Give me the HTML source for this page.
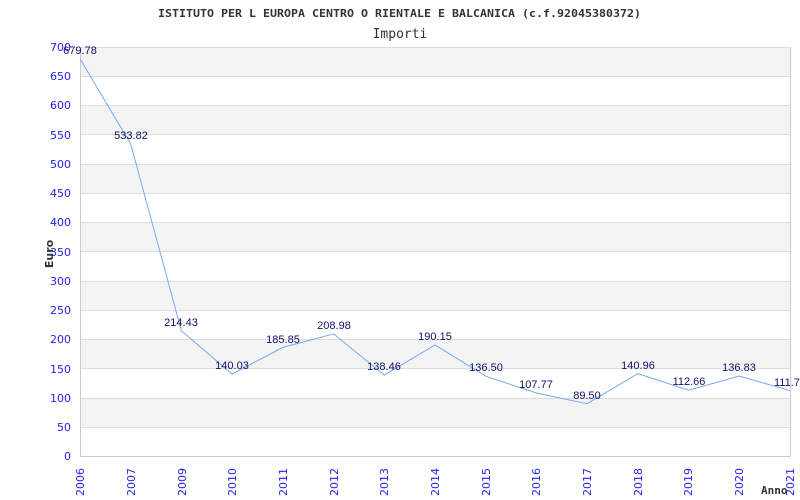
<!DOCTYPE html>
<html><head><meta charset="utf-8"><style>body{margin:0;background:#fff}svg{display:block}</style></head><body>
<svg width="800" height="500" xmlns="http://www.w3.org/2000/svg">
<text x="158" y="17" textLength="483" lengthAdjust="spacingAndGlyphs" font-family="DejaVu Sans Mono, Liberation Mono, monospace" font-weight="bold" font-size="11" fill="#333">ISTITUTO PER L EUROPA CENTRO O RIENTALE E BALCANICA (c.f.92045380372)</text>
<text x="400" y="38" text-anchor="middle" font-family="DejaVu Sans Mono, Liberation Mono, monospace" font-size="13" fill="#333">Importi</text>
<g fill="#f3f3f3">
<rect x="80" y="47" width="710" height="29.2"/>
<rect x="80" y="105.4" width="710" height="29.2"/>
<rect x="80" y="163.9" width="710" height="29.2"/>
<rect x="80" y="222.3" width="710" height="29.2"/>
<rect x="80" y="280.7" width="710" height="29.2"/>
<rect x="80" y="339.1" width="710" height="29.2"/>
<rect x="80" y="397.6" width="710" height="29.2"/>
</g>
<g stroke="#ddd" stroke-width="1">
<line x1="80" x2="790" y1="47.5" y2="47.5"/><line x1="80" x2="790" y1="76.5" y2="76.5"/><line x1="80" x2="790" y1="105.5" y2="105.5"/><line x1="80" x2="790" y1="134.5" y2="134.5"/><line x1="80" x2="790" y1="164.5" y2="164.5"/><line x1="80" x2="790" y1="193.5" y2="193.5"/><line x1="80" x2="790" y1="222.5" y2="222.5"/><line x1="80" x2="790" y1="251.5" y2="251.5"/><line x1="80" x2="790" y1="281.5" y2="281.5"/><line x1="80" x2="790" y1="310.5" y2="310.5"/><line x1="80" x2="790" y1="339.5" y2="339.5"/><line x1="80" x2="790" y1="368.5" y2="368.5"/><line x1="80" x2="790" y1="398.5" y2="398.5"/><line x1="80" x2="790" y1="427.5" y2="427.5"/>
</g>
<g stroke="#ccc" stroke-width="1"><line x1="80.5" x2="80.5" y1="47" y2="457"/><line x1="80" x2="790" y1="456.5" y2="456.5"/><line x1="790.5" x2="790.5" y1="47" y2="457"/></g>
<g font-family="DejaVu Sans, sans-serif" font-size="11" fill="#2222ee" text-anchor="end">
<text x="71" y="51">700</text><text x="71" y="80">650</text><text x="71" y="109">600</text><text x="71" y="139">550</text><text x="71" y="168">500</text><text x="71" y="197">450</text><text x="71" y="226">400</text><text x="71" y="256">350</text><text x="71" y="285">300</text><text x="71" y="314">250</text><text x="71" y="343">200</text><text x="71" y="373">150</text><text x="71" y="402">100</text><text x="71" y="431">50</text><text x="71" y="460">0</text>
</g>
<text transform="translate(53,254) rotate(-90)" text-anchor="middle" font-family="DejaVu Sans, sans-serif" font-weight="bold" font-size="11" fill="#333">Euro</text>
<g font-family="DejaVu Sans, sans-serif" font-size="11" fill="#2222ee">
<text transform="translate(84,496) rotate(-90)">2006</text>
<text transform="translate(135,496) rotate(-90)">2007</text>
<text transform="translate(186,496) rotate(-90)">2009</text>
<text transform="translate(236,496) rotate(-90)">2010</text>
<text transform="translate(287,496) rotate(-90)">2011</text>
<text transform="translate(338,496) rotate(-90)">2012</text>
<text transform="translate(388,496) rotate(-90)">2013</text>
<text transform="translate(439,496) rotate(-90)">2014</text>
<text transform="translate(490,496) rotate(-90)">2015</text>
<text transform="translate(540,496) rotate(-90)">2016</text>
<text transform="translate(591,496) rotate(-90)">2017</text>
<text transform="translate(642,496) rotate(-90)">2018</text>
<text transform="translate(692,496) rotate(-90)">2019</text>
<text transform="translate(743,496) rotate(-90)">2020</text>
<text transform="translate(794,496) rotate(-90)">2021</text>
</g>
<text x="761" y="494" font-family="DejaVu Sans Mono, monospace" font-weight="bold" font-size="11" fill="#333">Anno</text>
<polyline fill="none" stroke="#77aaee" stroke-width="1" points="80,58.8 130.7,144.1 181.4,330.7 232.1,374.1 282.9,347.4 333.6,333.9 384.3,375.1 435,344.9 485.7,376.2 536.4,393 587.1,403.7 637.9,373.6 688.6,390.2 739.3,376 790,390.7"/>
<g font-family="Liberation Sans, sans-serif" font-size="11" fill="#111166" text-anchor="middle">
<text x="80" y="54">679.78</text><text x="131" y="139">533.82</text><text x="181" y="326">214.43</text><text x="232" y="369">140.03</text><text x="283" y="343">185.85</text><text x="334" y="329">208.98</text><text x="384" y="370">138.46</text><text x="435" y="340">190.15</text><text x="486" y="371">136.50</text><text x="536" y="388">107.77</text><text x="587" y="399">89.50</text><text x="638" y="369">140.96</text><text x="689" y="385">112.66</text><text x="739" y="371">136.83</text><text x="790" y="386">111.73</text>
</g>
</svg>
</body></html>
